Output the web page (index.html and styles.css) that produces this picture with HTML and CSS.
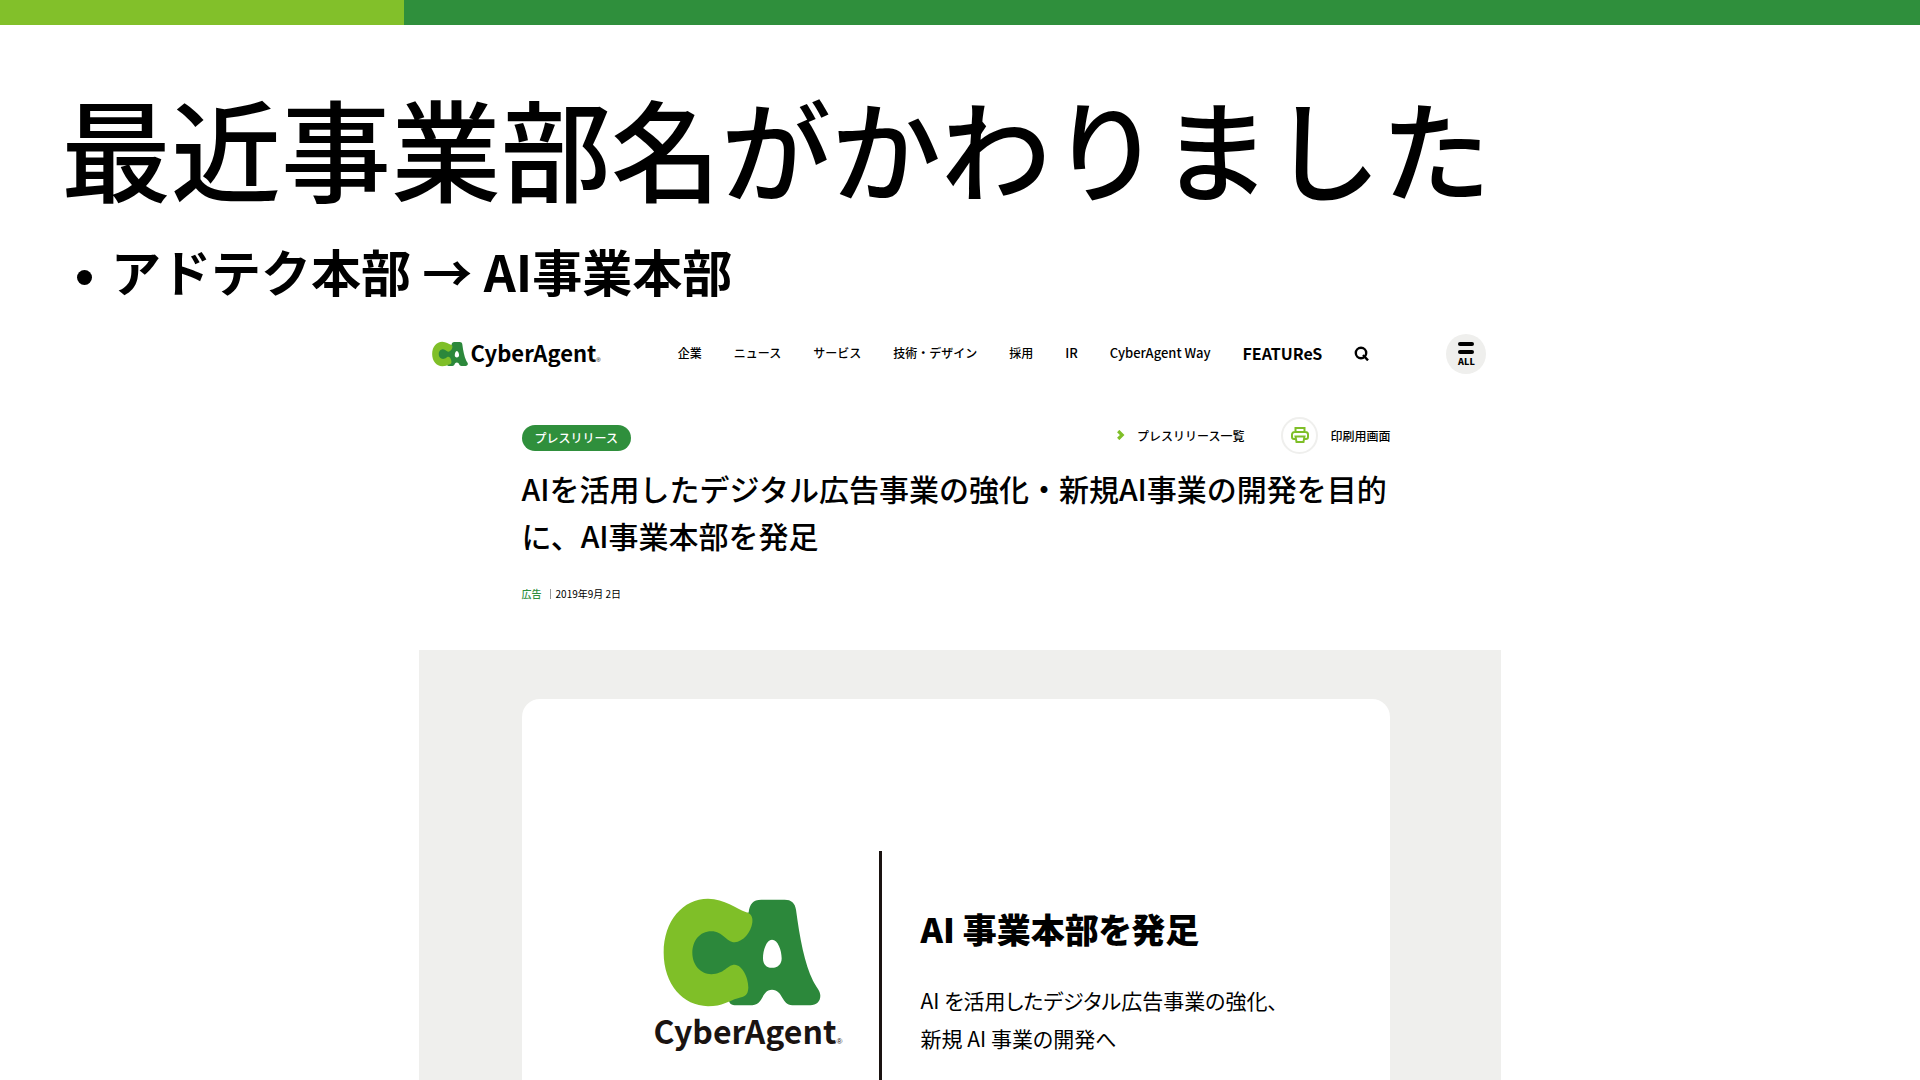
FILE: index.html
```html
<!DOCTYPE html>
<html lang="ja">
<head>
	<meta charset="utf-8">
	<title>最近事業部名がかわりました</title>
	<link rel="stylesheet" href="styles.css">
</head>
<body>
	<!-- 上部のライン -->
	<div class="bar"></div>

	<div class="intro">
		<h1>最近事業部名がかわりました</h1>
		<ul>
			<li>アドテク本部 → AI事業本部</li>
		</ul>
	</div>

	<!-- ロゴの図形 -->
	<svg class="defs" width="0" height="0" aria-hidden="true">
		<symbol id="ca" viewBox="70 172 474 326">
			<path fill="#2c883b" fill-rule="evenodd" d="M327 215C330 190 340 177 365 177H435C455 177 466 187 469 207C480 290 495 370 520 420C528 437 542 450 542 465C542 483 530 493 512 493H458C425 493 430 447 397 447C365 447 372 493 338 493H290C275 493 268 487 268 478L150 400V270ZM397 297C380 297 370 330 370 352C370 370 380 381 397 381C414 381 426 370 426 352C426 330 415 297 397 297Z"/>
			<path fill="#7fbf28" d="M205 174C255 174 290 205 320 214C335 218 340 230 338 245C334 275 310 303 285 304C260 304 250 271 215 271C180 271 158 300 158 336C158 372 182 400 215 400C255 400 262 372 285 372C308 373 326 410 326 440C325 465 315 467 295 472C265 480 250 496 205 496C130 496 72 430 72 336C72 240 130 174 205 174Z"/>
		</symbol>
	</svg>

	<div class="site">
		<header class="header">
			<a class="logo" href="#">
				<svg class="logo-mark"><use href="#ca"/></svg>
				<span class="logo-name">CyberAgent<small>®</small></span>
			</a>
			<nav class="nav">
				<a href="#">企業</a>
				<a href="#">ニュース</a>
				<a href="#">サービス</a>
				<a href="#">技術・デザイン</a>
				<a href="#">採用</a>
				<a class="en" href="#">IR</a>
				<a class="en" href="#">CyberAgent Way</a>
				<a class="features" href="#">FEATUReS</a>
				<button class="search" type="button" aria-label="検索">
					<svg width="16" height="16" viewBox="0 0 16 16" fill="none" stroke="#000" stroke-width="2.4"><circle cx="7" cy="8" r="5.2"/><path d="M9 10l5 5.400"/></svg>
				</button>
			</nav>
			<button class="menu" type="button">
				<i></i>
				<i></i>
				<span>ALL</span>
			</button>
		</header>

		<div class="article">
			<div class="tools">
				<a class="tag" href="#">プレスリリース</a>
				<a class="list" href="#">
					<svg width="8" height="10" viewBox="0 0 8 10" fill="none" stroke="#7fbf28" stroke-width="3.2"><path d="M1.200 1l4 4-4 4"/></svg>
					プレスリリース一覧
				</a>
				<a class="print" href="#">
					<span class="print-icon">
						<svg width="18" height="16" viewBox="0 0 18 16" fill="none" stroke="#7fbf28" stroke-width="2"><path d="M4.500 5V1h9v4M4.500 12H3a2 2 0 0 1-2-2V7.500a2.500 2.500 0 0 1 2.500-2.500h11A2.500 2.500 0 0 1 17 7.500V10a2 2 0 0 1-2 2h-1.500M4.500 9.500h9l-1 5.500h-7z"/></svg>
					</span>
					印刷用画面
				</a>
			</div>
			<h2>AIを活用したデジタル広告事業の強化・新規AI事業の開発を目的に、AI事業本部を発足</h2>
			<p class="meta"><a href="#">広告</a><span>2019年9月 2日</span></p>
		</div>

		<div class="main">
			<div class="card">
				<div class="brand">
					<svg class="brand-mark"><use href="#ca"/></svg>
					<span class="brand-name">CyberAgent<small>®</small></span>
				</div>
				<div class="text">
					<h3>AI 事業本部を発足</h3>
					<p>AI を活用したデジタル広告事業の強化、<br>新規 AI 事業の開発へ</p>
				</div>
			</div>
		</div>
	</div>
</body>
</html>
```
FILE: styles.css
```css
*{
	margin: 0;
	padding: 0;
	box-sizing: border-box;
	list-style: none;
}
body{
	display: flex;
	flex-direction: column;
	min-height: 100vh;
	background: #fff;
	color: #000;
	font-family: "Noto Sans CJK JP", sans-serif;
}
a{
	color: inherit;
	text-decoration: none;
}
button{
	border: 0;
	background: none;
	font-family: inherit;
	cursor: pointer;
}
.defs{
	position: absolute;
}

/* 上部のライン */
.bar{
	height: 25px;
	background: linear-gradient(to right, #82c02a 21.05%, #2f8f3c 21.05%);
}

/* 見出し */
.intro{
	padding: 41px 61px 0;
}
.intro h1{
	font-size: 110px;
	font-weight: 500;
	line-height: 160px;
}
.intro li{
	display: flex;
	align-items: center;
	gap: 19px;
	padding: 4px 16px 0;
	font-size: 50px;
	font-weight: 700;
	line-height: 80px;
}
.intro li::before{
	content: "";
	width: 15px;
	height: 15px;
	margin-top: 14px;
	border-radius: 50%;
	background: #000;
}

/* サイト */
.site{
	display: flex;
	flex-direction: column;
	flex: 1;
	width: 56.4%;
	min-width: 1080px;
	margin: 0 auto;
	padding-top: 14px;
	font-weight: 500;
}
.header{
	display: flex;
	align-items: center;
	height: 60px;
	padding: 0 15px 0 13px;
}
.logo{
	display: flex;
	align-items: center;
	gap: 3px;
}
.logo-mark{
	width: 36px;
	height: 26px;
}
.logo-name{
	padding-bottom: 4px;
	font-size: 22px;
	font-weight: 700;
	line-height: 32px;
}
.logo-name small{
	font-family: "Liberation Sans", sans-serif;
	font-size: 6px;
	font-weight: 400;
	line-height: 6px;
}
.nav{
	display: flex;
	align-items: center;
	gap: 32px;
	margin-left: 77px;
	padding-bottom: 3px;
	font-size: 12px;
	white-space: nowrap;
}
.en{
	font-size: 13px;
}
.features{
	font-size: 16px;
	font-weight: 700;
}
.search svg{
	display: block;
}
.menu{
	display: flex;
	flex-direction: column;
	align-items: center;
	justify-content: center;
	gap: 4px;
	width: 40px;
	height: 40px;
	margin-left: auto;
	border-radius: 50%;
	background: #efefed;
}
.menu i{
	width: 16px;
	height: 4px;
	border-radius: 2px;
	background: #000;
}
.menu span{
	font-size: 9px;
	font-weight: 900;
	line-height: 8px;
}

/* 記事 */
.article{
	padding: 32px 111px 46px 103px;
}
.tools{
	display: flex;
	align-items: center;
	height: 38px;
	font-size: 12px;
}
.tag{
	margin: 5px auto 0 0;
	padding: 0 13px;
	border-radius: 13px;
	background: #2f8f3c;
	color: #fff;
	line-height: 26px;
}
.list{
	display: flex;
	align-items: center;
	gap: 12px;
}
.print{
	display: flex;
	align-items: center;
	gap: 12px;
	margin-left: 37px;
}
.print-icon{
	display: flex;
	align-items: center;
	justify-content: center;
	width: 37px;
	height: 37px;
	border: 2px solid #efefed;
	border-radius: 50%;
}
.article h2{
	margin-top: 11px;
	font-size: 30px;
	font-weight: 500;
	line-height: 47px;
}
.meta{
	display: flex;
	align-items: center;
	margin-top: 25px;
	font-size: 10px;
	font-weight: 400;
	line-height: 20px;
}
.meta a{
	color: #2f8f3c;
	font-weight: 500;
}
.meta span{
	margin-left: 8px;
	padding-left: 5px;
	border-left: 1px solid #999;
	line-height: 10px;
}

/* カード */
.main{
	display: flex;
	flex: 1;
	padding: 49px 111px 0 103px;
	background: #efefed;
}
.card{
	display: flex;
	flex: 1;
	padding-top: 152px;
	border-radius: 18px 18px 0 0;
	background: #fff;
}
.brand{
	display: flex;
	flex-direction: column;
	width: 360px;
	padding: 47px 0 0 132px;
	border-right: 3px solid #1a1311;
	color: #1a1311;
}
.brand-mark{
	width: 158px;
	height: 109px;
	margin-left: 9px;
}
.brand-name{
	font-size: 32px;
	font-weight: 700;
	line-height: 46px;
}
.brand-name small{
	font-family: "Liberation Sans", sans-serif;
	font-size: 8px;
	font-weight: 400;
	line-height: 8px;
}
.text{
	padding: 53px 0 0 39px;
	font-feature-settings: "palt";
}
.text h3{
	font-size: 34px;
	font-weight: 900;
	line-height: 50px;
}
.text p{
	margin-top: 27px;
	font-size: 21px;
	font-weight: 400;
	line-height: 38px;
}
```
